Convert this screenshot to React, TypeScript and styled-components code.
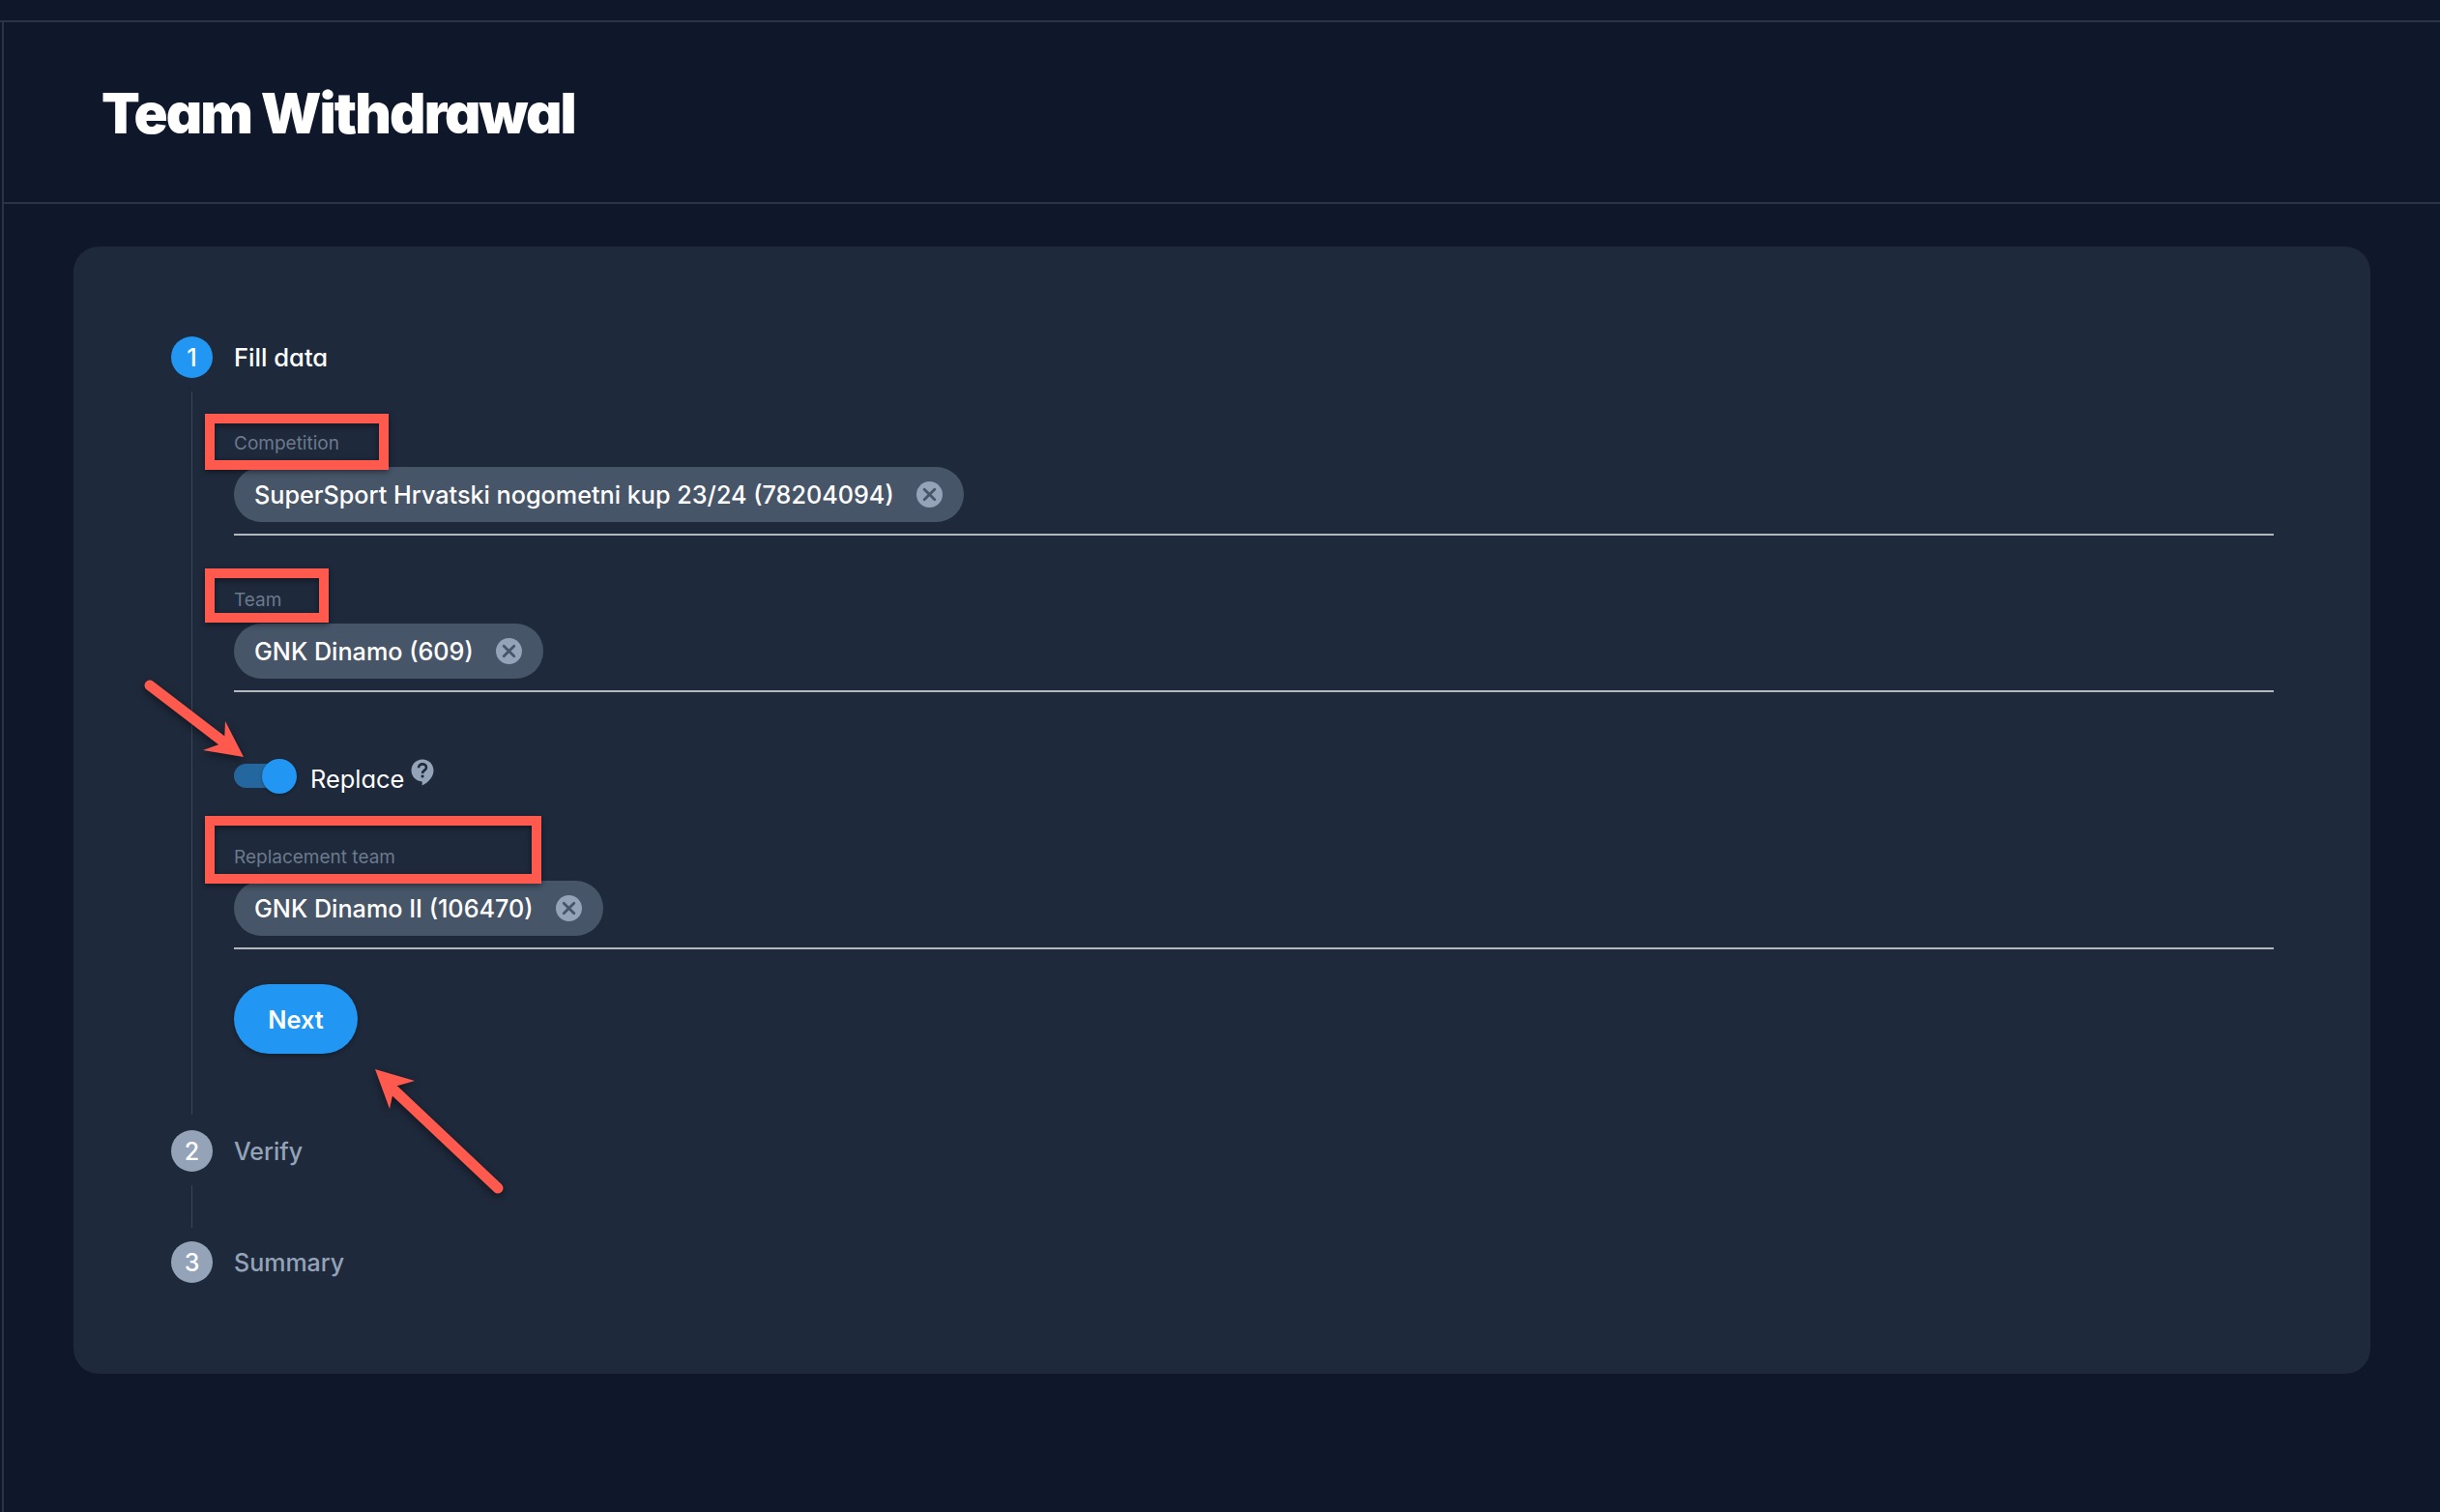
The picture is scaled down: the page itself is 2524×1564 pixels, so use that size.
import styled, { createGlobalStyle } from 'styled-components'

const COLORS = {
  page: '#0f182b',
  card: '#1e293b',
  rule: '#2b3446',
  chip: '#475569',
  muted: '#94a3b8',
  label: '#6c798c',
  blue: '#2196f3',
  track: '#24679f',
  underline: '#b4b8be',
  red: '#ff5a4d',
}

const GlobalStyle = createGlobalStyle`
  html, body {
    margin: 0;
    padding: 0;
    background: ${COLORS.page};
    font-family: Inter, "Liberation Sans", sans-serif;
    color: #fff;
  }
`

const Page = styled.div`
  position: relative;
  width: 2524px;
  height: 1564px;
  overflow: hidden;
  background: ${COLORS.page};
`

const TopStrip = styled.div`
  height: 21px;
  border-bottom: 2px solid ${COLORS.rule};
`

const Shell = styled.div`
  margin-left: 2px;
  height: 1541px;
  border-left: 2px solid ${COLORS.rule};
`

const Header = styled.header`
  height: 184px;
  padding: 2px 0 0 101px;
  display: flex;
  align-items: center;
  border-bottom: 2px solid ${COLORS.rule};
`

const Title = styled.h1`
  margin: 0;
  font-size: 58px;
  font-weight: 900;
  letter-spacing: -1.9px;
  font-feature-settings: 'cv11';
  color: #fff;
`

const Card = styled.main`
  box-sizing: border-box;
  width: 2376px;
  height: 1166px;
  margin: 44px 0 0 72px;
  padding: 93px 100px 0 101px;
  border-radius: 26px;
  background: ${COLORS.card};
`

const StepRow = styled.div`
  display: flex;
  align-items: center;
  gap: 22px;
  height: 43px;
`

const StepDot = styled.span<{ $active?: boolean }>`
  width: 43px;
  height: 43px;
  border-radius: 50%;
  display: flex;
  align-items: center;
  justify-content: center;
  font-size: 25px;
  font-weight: 500;
  color: #fff;
  background: ${(p) => (p.$active ? COLORS.blue : COLORS.muted)};
`

const StepName = styled.span<{ $active?: boolean }>`
  font-size: ${(p) => (p.$active ? 25.6 : 25)}px;
  font-weight: 500;
  font-feature-settings: ${(p) => (p.$active ? "'cv11'" : 'normal')};
  color: ${(p) => (p.$active ? '#fff' : COLORS.muted)};
`

const StepBody = styled.div`
  margin: 14px 0 16px 21px;
  padding: 42px 0 63px 43px;
  border-left: 1px solid #3b4658;
`

const Connector = styled.div`
  height: 44px;
  margin: 14px 0 14px 21px;
  border-left: 1px solid #3b4658;
`

const Field = styled.div<{ $gap?: number }>`
  margin-top: ${(p) => p.$gap ?? 0}px;
  padding-bottom: 12px;
  border-bottom: 2px solid ${COLORS.underline};
`

const FieldLabel = styled.div`
  position: relative;
  height: 24px;
  margin-bottom: 12px;
  font-size: 19px;
  line-height: 24px;
  color: ${COLORS.label};
`

const Callout = styled.span<{ $top: number; $width: number; $height: number }>`
  position: absolute;
  z-index: 1;
  left: -30px;
  top: ${(p) => p.$top}px;
  box-sizing: border-box;
  width: ${(p) => p.$width}px;
  height: ${(p) => p.$height}px;
  border: 10px solid ${COLORS.red};
  box-shadow: 0 2px 6px rgba(0, 0, 0, 0.45), inset 0 2px 6px rgba(0, 0, 0, 0.45);
`

const Chip = styled.div`
  display: inline-flex;
  align-items: center;
  vertical-align: top;
  gap: 23px;
  height: 57px;
  padding: 0 22px 0 21px;
  border-radius: 29px;
  background: ${COLORS.chip};
  font-size: 25.2px;
  font-weight: 500;
  color: #fff;
`

const ToggleRow = styled.div`
  display: flex;
  align-items: flex-start;
  height: 36px;
  margin-top: 69px;
`

const Toggle = styled.span`
  position: relative;
  display: block;
  flex: none;
  width: 65px;
  height: 36px;
  margin-right: 14px;
`

const ToggleTrack = styled.span`
  position: absolute;
  left: 0;
  top: 5px;
  width: 58px;
  height: 25px;
  border-radius: 13px;
  background: ${COLORS.track};
`

const ToggleThumb = styled.span`
  position: absolute;
  right: 0;
  top: 0;
  width: 36px;
  height: 36px;
  border-radius: 50%;
  background: ${COLORS.blue};
  box-shadow: 0 1px 3px rgba(0, 0, 0, 0.35);
`

const ToggleLabel = styled.span`
  margin-top: 3px;
  font-size: 25.4px;
  line-height: 36px;
  font-weight: 400;
  font-feature-settings: 'cv11';
  color: #fff;
`

const HelpIcon = styled.svg`
  display: block;
  width: 24px;
  height: 28px;
  margin-left: 7px;
`

const NextButton = styled.button`
  display: block;
  width: 128px;
  height: 72px;
  margin-top: 36px;
  padding: 0;
  border: 0;
  border-radius: 36px;
  background: ${COLORS.blue};
  box-shadow: 0 2px 5px rgba(0, 0, 0, 0.3);
  font-family: inherit;
  font-size: 25.3px;
  font-weight: 600;
  color: #fff;
`

const Annotations = styled.svg`
  position: absolute;
  left: 0;
  top: 0;
  pointer-events: none;
  filter: drop-shadow(0 3px 4px rgba(0, 0, 0, 0.45));
`

function ClearIcon(): JSX.Element {
  return (
    <svg width="27" height="27" viewBox="0 0 27 27" aria-hidden="true">
      <circle cx="13.5" cy="13.5" r="13.5" fill={COLORS.muted} />
      <path
        d="M8.2 8.2 18.8 18.8M18.8 8.2 8.2 18.8"
        stroke={COLORS.chip}
        strokeWidth="2.8"
        strokeLinecap="round"
      />
    </svg>
  )
}

export default function App(): JSX.Element {
  return (
    <Page>
      <GlobalStyle />
      <TopStrip />
      <Shell>
        <Header>
          <Title>Team Withdrawal</Title>
        </Header>
        <Card>
          <StepRow>
            <StepDot $active>1</StepDot>
            <StepName $active>Fill data</StepName>
          </StepRow>
          <StepBody>
            <Field>
              <FieldLabel>
                <Callout $top={-19} $width={190} $height={58} />
                Competition
              </FieldLabel>
              <Chip>
                SuperSport Hrvatski nogometni kup 23/24 (78204094)
                <ClearIcon />
              </Chip>
            </Field>
            <Field $gap={55}>
              <FieldLabel>
                <Callout $top={-21} $width={128} $height={56} />
                Team
              </FieldLabel>
              <Chip>
                GNK Dinamo (609)
                <ClearIcon />
              </Chip>
            </Field>
            <ToggleRow>
              <Toggle>
                <ToggleTrack />
                <ToggleThumb />
              </Toggle>
              <ToggleLabel>Replace</ToggleLabel>
              <HelpIcon viewBox="0 0 24 28" aria-hidden="true">
                <path
                  d="M12 0.5C5.6 0.5 0.5 5.6 0.5 12c0 6.2 5 11.2 11.2 11.4V27.5c5.8-2.8 11.8-8.4 11.8-15.5C23.5 5.6 18.4 0.5 12 0.5Z"
                  fill={COLORS.muted}
                />
                <path
                  d="M8 9.2c0-2.3 1.8-3.8 4-3.8s4 1.4 4 3.5c0 2.9-4 3-4 6"
                  fill="none"
                  stroke={COLORS.card}
                  strokeWidth="2.6"
                />
                <rect x="10.7" y="16.6" width="2.7" height="2.8" fill={COLORS.card} />
              </HelpIcon>
            </ToggleRow>
            <Field $gap={54}>
              <FieldLabel>
                <Callout $top={-31} $width={348} $height={70} />
                Replacement team
              </FieldLabel>
              <Chip>
                GNK Dinamo II (106470)
                <ClearIcon />
              </Chip>
            </Field>
            <NextButton>Next</NextButton>
          </StepBody>
          <StepRow>
            <StepDot>2</StepDot>
            <StepName>Verify</StepName>
          </StepRow>
          <Connector />
          <StepRow>
            <StepDot>3</StepDot>
            <StepName>Summary</StepName>
          </StepRow>
        </Card>
      </Shell>
      <Annotations width="2524" height="1564" viewBox="0 0 2524 1564" aria-hidden="true">
        <path d="M155 709 232 768" stroke={COLORS.red} strokeWidth="11" strokeLinecap="round" />
        <polygon points="252,783 233,746 232,768 210,776" fill={COLORS.red} />
        <path d="M408 1128 515 1229" stroke={COLORS.red} strokeWidth="11" strokeLinecap="round" />
        <polygon points="388,1106 429,1118 408,1124 403,1147" fill={COLORS.red} />
      </Annotations>
    </Page>
  )
}
